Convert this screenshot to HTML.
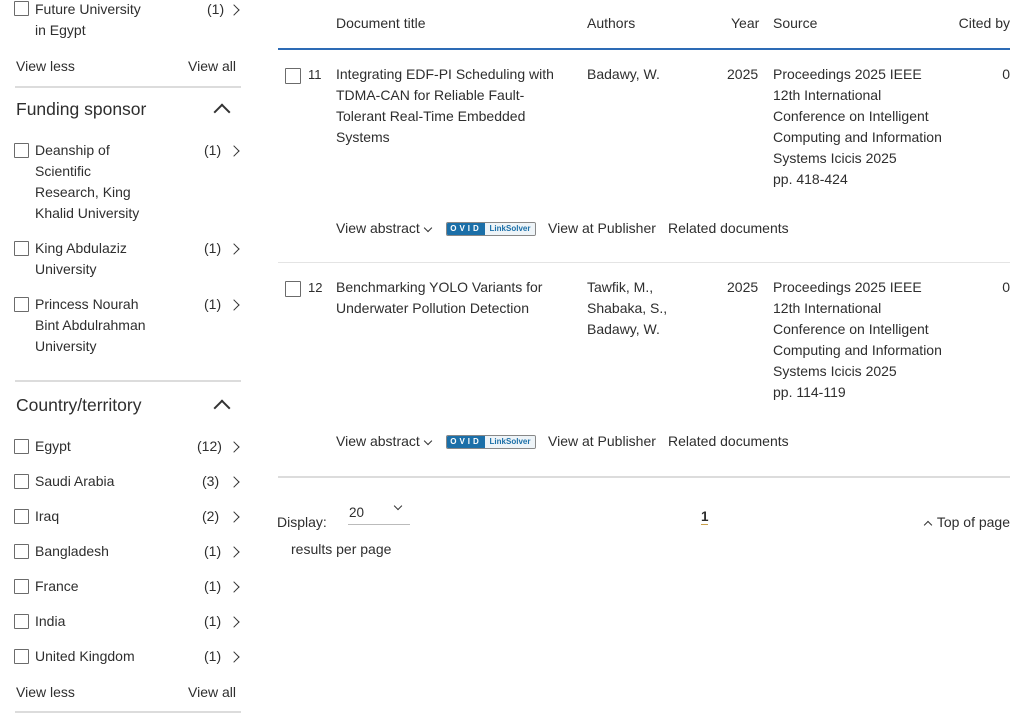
<!DOCTYPE html>
<html><head><meta charset="utf-8"><style>
body{margin:0;width:1024px;height:723px;background:#fff;font-family:"Liberation Sans",sans-serif;font-size:14px;color:#2e2e2e;position:relative;overflow:hidden}
.a{position:absolute;line-height:21px;white-space:nowrap}
.cb{position:absolute;width:15px;height:15px;border:1.5px solid #6b6b6b;box-sizing:border-box;border-radius:1px}
.chev{position:absolute;width:7px;height:7px;border-right:1.6px solid #333;border-top:1.6px solid #333;transform:rotate(45deg)}
.sm{position:absolute;width:5px;height:5px;border-right:1.2px solid #333;border-top:1.2px solid #333}
.up{position:absolute;width:10px;height:10px;border-left:2px solid #333;border-top:2px solid #333;transform:rotate(45deg)}
.hr{position:absolute;height:1.5px;background:#dcdcdc}
.h{font-size:17.5px}
.ovid{position:absolute;width:88px;height:12px;border:1px solid #888;border-radius:2px;font-size:8px;line-height:12px;display:flex;overflow:hidden}
.ovid span:first-child{background:#1b6fa8;color:#fff;width:38px;text-align:center;font-weight:bold;letter-spacing:3px}
.ovid span:last-child{color:#1b6fa8;background:#eef4f8;flex:1;text-align:center;font-weight:bold}
</style></head><body>
<div class="cb" style="left:14px;top:1px"></div>
<div class="a" style="left:35px;top:-1px">Future University<br>in Egypt</div>
<div class="a" style="left:207px;top:-1px">(1)</div><div class="chev" style="left:230px;top:6px"></div>
<div class="a" style="left:16px;top:56px">View less</div><div class="a" style="left:188px;top:56px">View all</div>
<div class="hr" style="left:15px;top:86px;width:226px"></div>
<div class="a h" style="left:16px;top:99px">Funding sponsor</div><div class="up" style="left:216px;top:106px"></div>
<div class="cb" style="left:14px;top:143px"></div>
<div class="a" style="left:35px;top:140px">Deanship of<br>Scientific<br>Research, King<br>Khalid University</div>
<div class="a" style="left:204px;top:140px">(1)</div><div class="chev" style="left:230px;top:147px"></div>
<div class="cb" style="left:14px;top:241px"></div>
<div class="a" style="left:35px;top:238px">King Abdulaziz<br>University</div>
<div class="a" style="left:204px;top:238px">(1)</div><div class="chev" style="left:230px;top:245px"></div>
<div class="cb" style="left:14px;top:297px"></div>
<div class="a" style="left:35px;top:294px">Princess Nourah<br>Bint Abdulrahman<br>University</div>
<div class="a" style="left:204px;top:294px">(1)</div><div class="chev" style="left:230px;top:301px"></div>
<div class="hr" style="left:15px;top:380px;width:226px"></div>
<div class="a h" style="left:16px;top:395px">Country/territory</div><div class="up" style="left:216px;top:402px"></div>
<div class="cb" style="left:14px;top:439px"></div><div class="a" style="left:35px;top:436px">Egypt</div><div class="a" style="left:197px;top:436px">(12)</div><div class="chev" style="left:230px;top:443px"></div>
<div class="cb" style="left:14px;top:474px"></div><div class="a" style="left:35px;top:471px">Saudi Arabia</div><div class="a" style="left:202px;top:471px">(3)</div><div class="chev" style="left:230px;top:478px"></div>
<div class="cb" style="left:14px;top:509px"></div><div class="a" style="left:35px;top:506px">Iraq</div><div class="a" style="left:202px;top:506px">(2)</div><div class="chev" style="left:230px;top:513px"></div>
<div class="cb" style="left:14px;top:544px"></div><div class="a" style="left:35px;top:541px">Bangladesh</div><div class="a" style="left:204px;top:541px">(1)</div><div class="chev" style="left:230px;top:548px"></div>
<div class="cb" style="left:14px;top:579px"></div><div class="a" style="left:35px;top:576px">France</div><div class="a" style="left:204px;top:576px">(1)</div><div class="chev" style="left:230px;top:583px"></div>
<div class="cb" style="left:14px;top:614px"></div><div class="a" style="left:35px;top:611px">India</div><div class="a" style="left:204px;top:611px">(1)</div><div class="chev" style="left:230px;top:618px"></div>
<div class="cb" style="left:14px;top:649px"></div><div class="a" style="left:35px;top:646px">United Kingdom</div><div class="a" style="left:204px;top:646px">(1)</div><div class="chev" style="left:230px;top:653px"></div>
<div class="a" style="left:16px;top:682px">View less</div><div class="a" style="left:188px;top:682px">View all</div>
<div class="hr" style="left:15px;top:711px;width:226px"></div>
<div class="a" style="left:336px;top:13px">Document title</div>
<div class="a" style="left:587px;top:13px">Authors</div>
<div class="a" style="left:731px;top:13px">Year</div>
<div class="a" style="left:773px;top:13px">Source</div>
<div class="a" style="right:14px;top:13px">Cited by</div>
<div style="position:absolute;left:278px;top:48px;width:732px;height:2px;background:#2d6bb5"></div>
<div class="cb" style="left:285px;top:68px;width:16px;height:16px"></div>
<div class="a" style="left:308px;top:64px;font-size:13px">11</div>
<div class="a" style="left:336px;top:64px">Integrating EDF-PI Scheduling with<br>TDMA-CAN for Reliable Fault-<br>Tolerant Real-Time Embedded<br>Systems</div>
<div class="a" style="left:587px;top:64px">Badawy, W.</div>
<div class="a" style="left:727px;top:64px">2025</div>
<div class="a" style="left:773px;top:64px">Proceedings 2025 IEEE<br>12th International<br>Conference on Intelligent<br>Computing and Information<br>Systems Icicis 2025<br>pp. 418-424</div>
<div class="a" style="right:14px;top:64px">0</div>
<div class="a" style="left:336px;top:218px">View abstract</div><div class="sm" style="left:425px;top:225px;transform:rotate(135deg)"></div>
<div class="ovid" style="left:446px;top:222px"><span>OVID</span><span>LinkSolver</span></div>
<div class="a" style="left:548px;top:218px">View at Publisher</div>
<div class="a" style="left:668px;top:218px">Related documents</div>
<div class="hr" style="left:278px;top:262px;width:732px;height:1px;background:#e4e4e4"></div>
<div class="cb" style="left:285px;top:281px;width:16px;height:16px"></div>
<div class="a" style="left:308px;top:277px;font-size:13px">12</div>
<div class="a" style="left:336px;top:277px">Benchmarking YOLO Variants for<br>Underwater Pollution Detection</div>
<div class="a" style="left:587px;top:277px">Tawfik, M.,<br>Shabaka, S.,<br>Badawy, W.</div>
<div class="a" style="left:727px;top:277px">2025</div>
<div class="a" style="left:773px;top:277px">Proceedings 2025 IEEE<br>12th International<br>Conference on Intelligent<br>Computing and Information<br>Systems Icicis 2025<br>pp. 114-119</div>
<div class="a" style="right:14px;top:277px">0</div>
<div class="a" style="left:336px;top:431px">View abstract</div><div class="sm" style="left:425px;top:438px;transform:rotate(135deg)"></div>
<div class="ovid" style="left:446px;top:435px"><span>OVID</span><span>LinkSolver</span></div>
<div class="a" style="left:548px;top:431px">View at Publisher</div>
<div class="a" style="left:668px;top:431px">Related documents</div>
<div class="hr" style="left:278px;top:476px;width:732px;height:2px"></div>
<div class="a" style="left:277px;top:512px;font-size:14px">Display:</div>
<div class="a" style="left:349px;top:502px;font-size:13.5px">20</div>
<div class="sm" style="left:395px;top:503px;transform:rotate(135deg)"></div>
<div style="position:absolute;left:348px;top:524px;width:62px;height:1px;background:#bbb"></div>
<div class="a" style="left:701px;top:506px;font-weight:bold;font-size:13.5px">1</div>
<div style="position:absolute;left:701px;top:524px;width:7px;height:1px;background:#c9a04a"></div>
<div class="sm" style="left:925px;top:522px;transform:rotate(-45deg)"></div>
<div class="a" style="right:14px;top:512px;font-size:14px">Top of page</div>
<div class="a" style="left:291px;top:539px;font-size:14px">results per page</div>
</body></html>
